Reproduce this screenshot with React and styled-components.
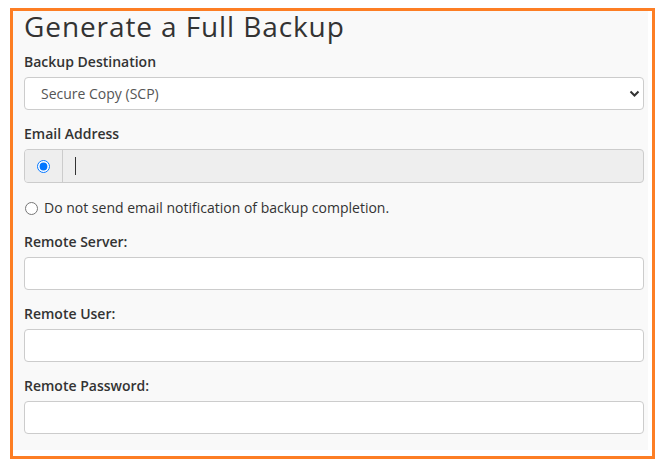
import React from "react";
import styled, { createGlobalStyle } from "styled-components";

const Global = createGlobalStyle`
  html, body { margin: 0; padding: 0; background: #ffffff; }
  body { font-family: "Open Sans", "Liberation Sans", sans-serif; color: #333; }
  * { box-sizing: border-box; }
`;

const Frame = styled.div`
  margin: 8px 10px 0 10px;
  width: 645px;
  height: 451px;
  border: 3px solid #fd7e24;
  background: #ffffff;
  display: flex;
  flex-direction: column;
`;

const Panel = styled.div`
  flex: 1;
  margin: 0 4px 6px 0;
  background: #f9f9f9;
  padding: 0 4px 0 11px;
  display: flex;
  flex-direction: column;
`;

const Title = styled.h1`
  margin: 0 0 11px 0;
  font-size: 28px;
  line-height: 30px;
  letter-spacing: 0.9px;
  font-weight: 400;
  color: #333;
`;

const Group = styled.div`
  display: flex;
  flex-direction: column;
  margin-bottom: ${(p) => p.$mb ?? 14}px;
`;

const Label = styled.label`
  display: block;
  font-size: 14px;
  line-height: 20px;
  font-weight: 600;
  color: #333;
  margin-bottom: 5px;
`;

const SelectWrap = styled.div`
  position: relative;
  height: 33px;
`;

const Select = styled.select`
  appearance: none;
  width: 100%;
  height: 33px;
  border: 1px solid #cccccc;
  border-radius: 4px;
  background: #ffffff;
  font-family: "Open Sans", "Liberation Sans", sans-serif;
  font-size: 14px;
  color: #555;
  padding: 0 12px 0 16px;
  outline: none;
`;

const Chevron = styled.svg`
  position: absolute;
  right: 4px;
  top: 12px;
  width: 11px;
  height: 9px;
  pointer-events: none;
`;

const InputGroup = styled.div`
  display: flex;
  height: 34px;
  border: 1px solid #cccccc;
  border-radius: 4px;
  background: #eeeeee;
  overflow: hidden;
`;

const Addon = styled.div`
  width: 38px;
  display: flex;
  align-items: center;
  justify-content: center;
  border-right: 1px solid #cccccc;
  background: #eeeeee;
`;

const Radio = styled.input`
  margin: 0;
  width: 13px;
  height: 13px;
`;

const FakeInput = styled.div`
  flex: 1;
  display: flex;
  align-items: center;
  padding-left: 12px;
`;

const Caret = styled.span`
  display: block;
  width: 1px;
  height: 18px;
  background: #333;
`;

const RadioRow = styled.label`
  display: flex;
  align-items: center;
  gap: 6px;
  font-size: 14px;
  line-height: 20px;
  color: #333;
  margin: 15px 0 14px 0;
  padding-left: 1px;
`;

const TextInput = styled.input`
  width: 100%;
  height: 33px;
  border: 1px solid #cccccc;
  border-radius: 4px;
  background: #ffffff;
  font-family: "Open Sans", "Liberation Sans", sans-serif;
  font-size: 14px;
  padding: 0 12px;
  outline: none;
`;

export default function App() {
  return (
    <>
      <Global />
      <Frame>
        <Panel>
          <Title>Generate a Full Backup</Title>
          <Group>
            <Label>Backup Destination</Label>
            <SelectWrap>
              <Select defaultValue="scp">
                <option value="scp">Secure Copy (SCP)</option>
              </Select>
              <Chevron viewBox="0 0 11 9">
                <path d="M1.5 2.5 L5.5 6.5 L9.5 2.5" fill="none" stroke="#333" strokeWidth="2" />
              </Chevron>
            </SelectWrap>
          </Group>
          <Group $mb={0}>
            <Label>Email Address</Label>
            <InputGroup>
              <Addon>
                <Radio type="radio" name="email" defaultChecked />
              </Addon>
              <FakeInput>
                <Caret />
              </FakeInput>
            </InputGroup>
          </Group>
          <RadioRow>
            <Radio type="radio" name="email" />
            Do not send email notification of backup completion.
          </RadioRow>
          <Group>
            <Label>Remote Server:</Label>
            <TextInput type="text" />
          </Group>
          <Group>
            <Label>Remote User:</Label>
            <TextInput type="text" />
          </Group>
          <Group>
            <Label>Remote Password:</Label>
            <TextInput type="password" />
          </Group>
        </Panel>
      </Frame>
    </>
  );
}
